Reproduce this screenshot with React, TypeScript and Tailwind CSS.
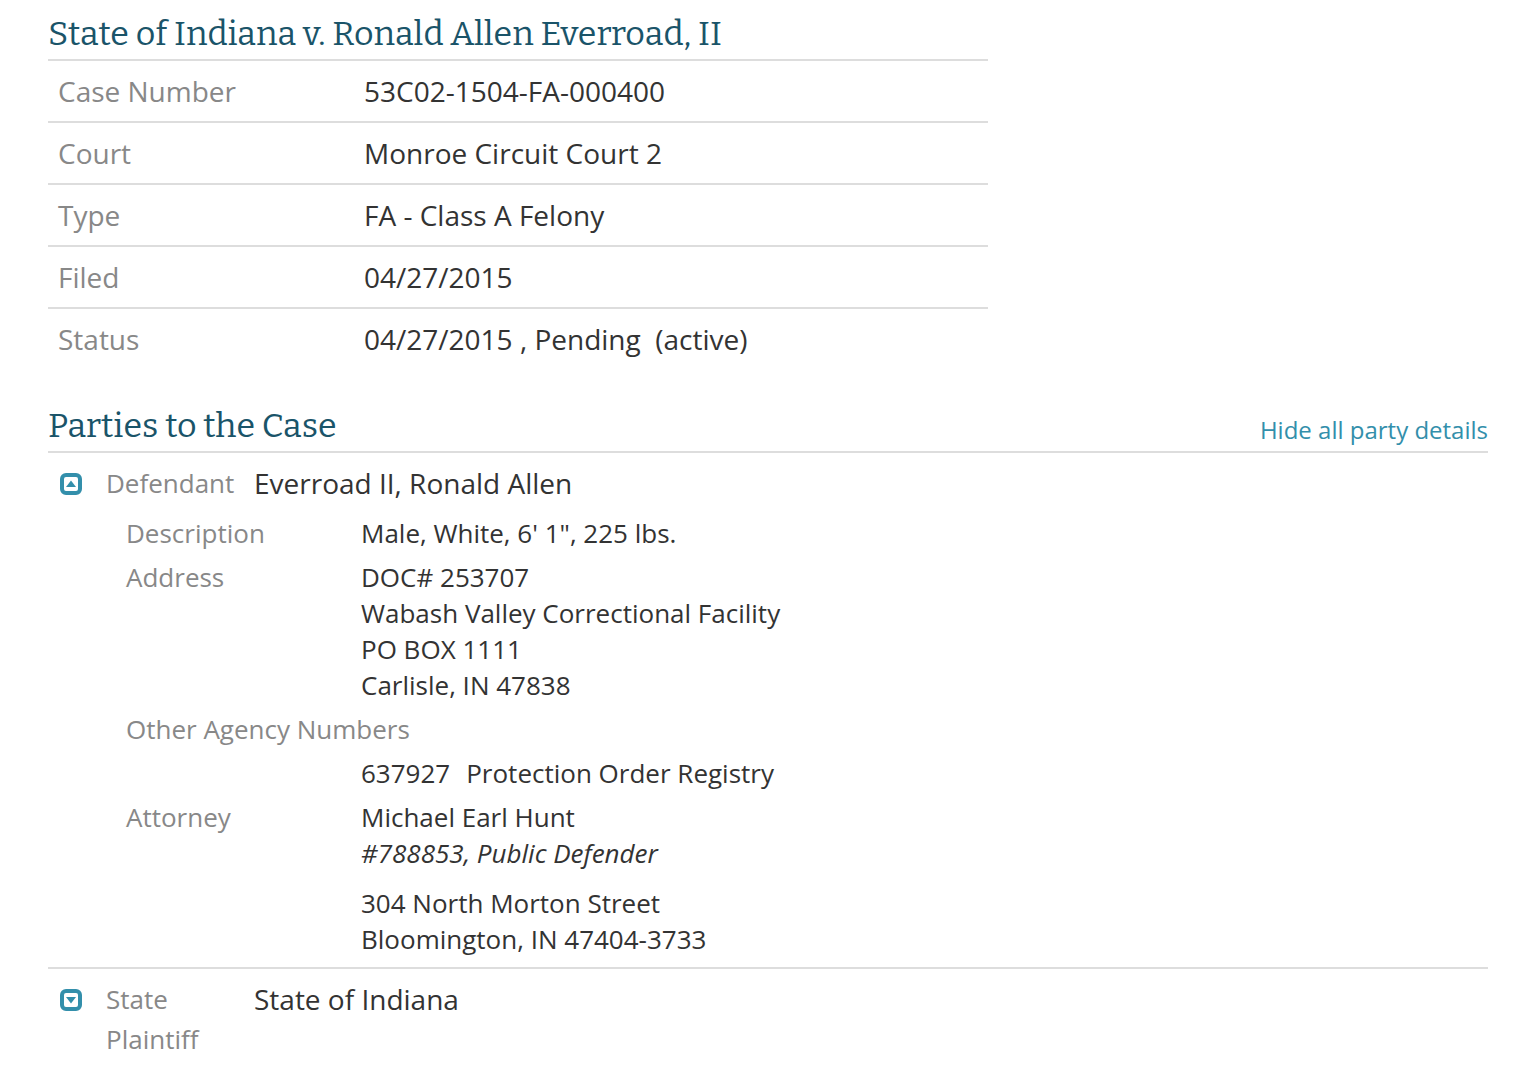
import { useState } from "react";

const caseRows = [
  ["Case Number", "53C02-1504-FA-000400"],
  ["Court", "Monroe Circuit Court 2"],
  ["Type", "FA - Class A Felony"],
  ["Filed", "04/27/2015"],
  ["Status", "04/27/2015 , Pending\u00a0 (active)"],
];

function Toggle({ open, onClick, label }: { open: boolean; onClick: () => void; label: string }) {
  return (
    <button type="button" onClick={onClick} aria-expanded={open} aria-label={label} className="ml-3 mt-[10px] h-[22px] w-[22px] shrink-0">
      <svg viewBox="0 0 22 22" className="h-full w-full">
        <rect x="2" y="2" width="18" height="18" rx="4" fill="white" stroke="#338fab" strokeWidth="4" />
        <path d={open ? "M6 14 L11 7.5 L16 14 Z" : "M6 8 L11 14.5 L16 8 Z"} fill="#338fab" />
      </svg>
    </button>
  );
}

export default function App() {
  const [first, setFirst] = useState(true);
  const [second, setSecond] = useState(false);
  const heading = "font-['Bitter','Noto_Serif','DejaVu_Serif',serif] text-[34px] leading-[50px] text-[#1a5469]";
  return (
    <main className="bg-white px-12 pt-[9px] font-['Open_Sans',sans-serif] text-[28px] leading-10 text-[#333333]">
      <section className="max-w-[940px]">
        <h1 className={heading}>State of Indiana v. Ronald Allen Everroad, II</h1>
        <table className="w-full">
          <tbody>
            {caseRows.map(([label, value]) => (
              <tr key={label} className="border-t-2 border-[#dddddd]">
                <th scope="row" className="w-[306px] px-[10px] py-[10px] text-left font-normal text-[#888888]">{label}</th>
                <td className="px-[10px] py-[10px]">{value}</td>
              </tr>
            ))}
          </tbody>
        </table>
      </section>

      <section className="mt-8">
        <header className="flex items-end justify-between border-b-2 border-[#dddddd]">
          <h2 className={heading}>Parties to the Case</h2>
          <a href="#parties" className="text-2xl leading-[42px] text-[#338fab]">Hide all party details</a>
        </header>

        <article id="parties" className="border-b-2 border-[#dddddd] pb-[10px] pt-[10px]">
          <div className="flex">
            <Toggle open={first} onClick={() => setFirst(!first)} label="Defendant details" />
            <span className="ml-6 w-[148px] text-[26px] text-[#888888]">Defendant</span>
            <span>Everroad II, Ronald Allen</span>
          </div>
          {first && (
            <dl className="ml-[78px] mt-3 grid grid-cols-[235px_1fr] gap-y-2 text-[26px] leading-9">
              <dt className="text-[#888888]">Description</dt>
              <dd>Male, White, 6' 1", 225 lbs.</dd>
              <dt className="text-[#888888]">Address</dt>
              <dd>
                DOC# 253707
                <br />
                Wabash Valley Correctional Facility
                <br />
                PO BOX 1111
                <br />
                Carlisle, IN 47838
              </dd>
              <dt className="col-span-2 text-[#888888]">Other Agency Numbers</dt>
              <dd className="col-start-2 flex gap-4">
                <span>637927</span>
                <span>Protection Order Registry</span>
              </dd>
              <dt className="text-[#888888]">Attorney</dt>
              <dd>
                <p>Michael Earl Hunt</p>
                <p className="italic">#788853, Public Defender</p>
                <p className="mt-[14px]">
                  304 North Morton Street
                  <br />
                  Bloomington, IN 47404-3733
                </p>
              </dd>
            </dl>
          )}
        </article>

        <article className="flex pt-[10px]">
          <Toggle open={second} onClick={() => setSecond(!second)} label="State plaintiff details" />
          <span className="ml-6 w-[148px] pr-5 text-[26px] text-[#888888]">State Plaintiff</span>
          <span>State of Indiana</span>
        </article>
      </section>
    </main>
  );
}
